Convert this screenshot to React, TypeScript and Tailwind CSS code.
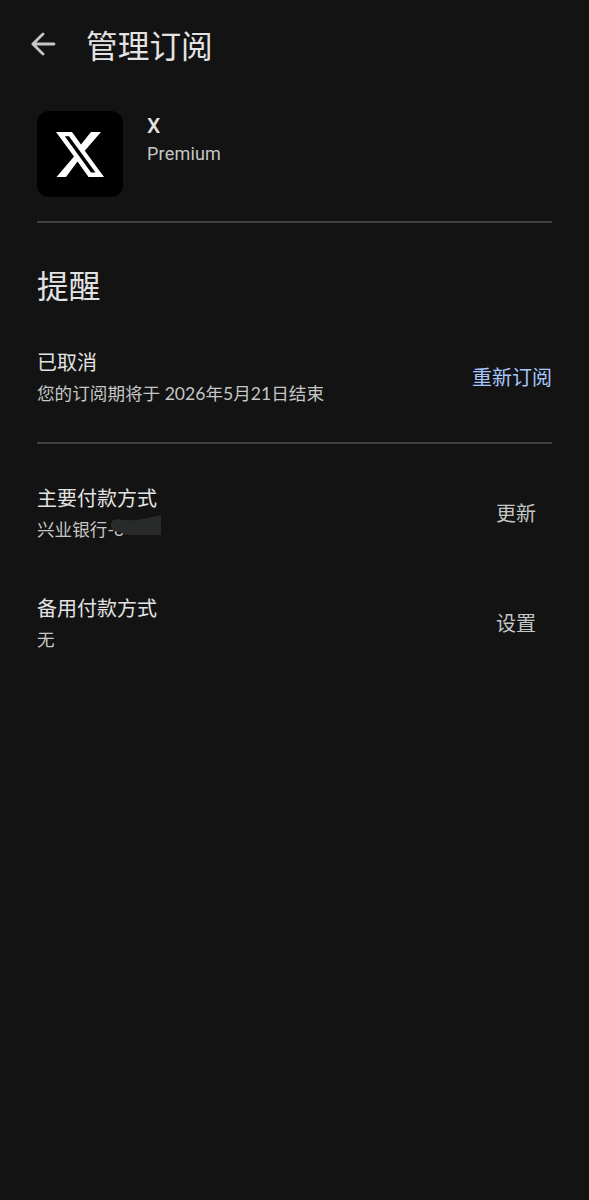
import React from "react";

const font = "font-['Lato','Noto_Sans_CJK_SC',sans-serif]";

function Row({ title, sub, action, accent, className }: { title: string; sub: React.ReactNode; action: string; accent?: boolean; className: string }) {
  return (
    <section className={`flex items-center justify-between ${className}`}>
      <div>
        <h3 className="text-[20px] leading-[32px] text-[#e3e3e3]">{title}</h3>
        <div className="flex pb-px text-[17.6px] leading-[32px] text-[#c4c7c5]">{sub}</div>
      </div>
      <button className={`mb-[3px] text-[20px] leading-[32px] ${accent ? "text-[#a8c7fa]" : "mr-[16px] text-[#c4c7c5]"}`}>{action}</button>
    </section>
  );
}

export default function App() {
  return (
    <main className={`flex h-[1200px] w-full flex-col bg-[#131313] ${font}`}>
      <header className="flex h-[91px] items-center pl-[31px]">
        <svg className="mb-[4px]" width="25" height="24" viewBox="0 0 25 24" fill="none" stroke="#c4c7c5" strokeWidth="2.8" strokeLinecap="round" strokeLinejoin="round">
          <path d="M23 12H2M12 2L1.9 12L12 22" />
        </svg>
        <h1 className="ml-[30px] text-[31.7px] leading-[44px] text-[#e3e3e3]">管理订阅</h1>
      </header>
      <div className="flex flex-col px-[37px]">
        <section className="mt-[20px] flex h-[110px]">
          <div className="flex h-[86px] w-[86px] items-center justify-center rounded-[12px] bg-black">
            <svg width="48" height="45" viewBox="0 0 48 45" fill="#fff" fillRule="evenodd">
              <path d="M0 0H16L25 12.5L35 0H45L28.8 18.7L48 45H32.5L21.5 29.5L10 45H.5L18 24.5ZM8.8 4.2L35 40.5H39.5L13 4.2Z" />
            </svg>
          </div>
          <div className="ml-[24px]">
            <h2 className="font-['Roboto',sans-serif] text-[21px] font-medium leading-[30px] text-[#e3e3e3]">X</h2>
            <p className="font-['Roboto',sans-serif] text-[18px] leading-[26px] tracking-[0.2px] text-[#c4c7c5]">Premium</p>
          </div>
        </section>
        <hr className="h-[2px] border-0 bg-[#3f4140]" />
        <h2 className="mt-[41px] text-[31.7px] leading-[44px] text-[#e3e3e3]">提醒</h2>
        <Row className="mt-[38px]" title="已取消" sub="您的订阅期将于 2026年5月21日结束" action="重新订阅" accent />
        <hr className="mt-[31px] h-[2px] border-0 bg-[#3f4140]" />
        <Row
          className="mt-[38px]"
          title="主要付款方式"
          sub={
            <span className="relative">
              兴业银行-8
              <svg className="absolute left-[74px] top-[1px]" width="50" height="22" viewBox="0 0 50 22">
                <path d="M0 10Q0 4 7 4Q14 6 24 5Q35 4 50 0V20H21Q13 20 9 17Q0 17 0 10Z" fill="#292a2a" />
              </svg>
            </span>
          }
          action="更新"
        />
        <Row className="mt-[45px]" title="备用付款方式" sub="无" action="设置" />
      </div>
    </main>
  );
}
